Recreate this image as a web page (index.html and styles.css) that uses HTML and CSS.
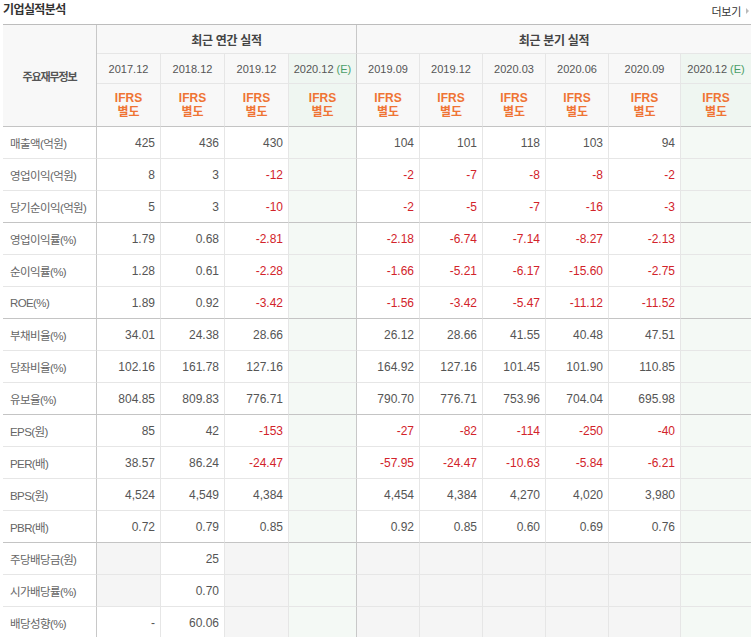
FILE: index.html
```html
<!DOCTYPE html>
<html lang="ko">
<head>
<meta charset="utf-8">
<title>기업실적분석</title>
<link rel="stylesheet" href="styles.css">
</head>
<body>
<div class="wrap">
  <div class="titlebar">
    <h2 class="title">기업실적분석</h2>
    <a class="more" href="#">더보기<span class="arrow"></span></a>
  </div>
  <table class="fin">
    <colgroup>
      <col class="c-label">
      <col class="c-y"><col class="c-y"><col class="c-y"><col class="c-ye">
      <col class="c-q"><col class="c-q"><col class="c-q"><col class="c-q"><col class="c-q2"><col class="c-qe">
    </colgroup>
    <thead>
      <tr class="h1">
        <th rowspan="3" class="hlabel major">주요재무정보</th>
        <th colspan="4" class="grp major">최근 연간 실적</th>
        <th colspan="6" class="grp last">최근 분기 실적</th>
      </tr>
      <tr class="h2">
        <th>2017.12</th><th>2018.12</th><th>2019.12</th><th class="est major">2020.12 <span class="e">(E)</span></th>
        <th>2019.09</th><th>2019.12</th><th>2020.03</th><th>2020.06</th><th>2020.09</th><th class="est last">2020.12 <span class="e">(E)</span></th>
      </tr>
      <tr class="h3">
        <th>IFRS<br>별도</th><th>IFRS<br>별도</th><th>IFRS<br>별도</th><th class="est major">IFRS<br>별도</th>
        <th>IFRS<br>별도</th><th>IFRS<br>별도</th><th>IFRS<br>별도</th><th>IFRS<br>별도</th><th>IFRS<br>별도</th><th class="est last">IFRS<br>별도</th>
      </tr>
    </thead>
    <tbody>
      <tr><th class="major">매출액(억원)</th><td>425</td><td>436</td><td>430</td><td class="est major"></td><td>104</td><td>101</td><td>118</td><td>103</td><td>94</td><td class="est last"></td></tr>
      <tr><th class="major">영업이익(억원)</th><td>8</td><td>3</td><td class="neg">-12</td><td class="est major"></td><td class="neg">-2</td><td class="neg">-7</td><td class="neg">-8</td><td class="neg">-8</td><td class="neg">-2</td><td class="est last"></td></tr>
      <tr class="gend"><th class="major">당기순이익(억원)</th><td>5</td><td>3</td><td class="neg">-10</td><td class="est major"></td><td class="neg">-2</td><td class="neg">-5</td><td class="neg">-7</td><td class="neg">-16</td><td class="neg">-3</td><td class="est last"></td></tr>

      <tr><th class="major">영업이익률(%)</th><td>1.79</td><td>0.68</td><td class="neg">-2.81</td><td class="est major"></td><td class="neg">-2.18</td><td class="neg">-6.74</td><td class="neg">-7.14</td><td class="neg">-8.27</td><td class="neg">-2.13</td><td class="est last"></td></tr>
      <tr><th class="major">순이익률(%)</th><td>1.28</td><td>0.61</td><td class="neg">-2.28</td><td class="est major"></td><td class="neg">-1.66</td><td class="neg">-5.21</td><td class="neg">-6.17</td><td class="neg">-15.60</td><td class="neg">-2.75</td><td class="est last"></td></tr>
      <tr class="gend"><th class="major">ROE(%)</th><td>1.89</td><td>0.92</td><td class="neg">-3.42</td><td class="est major"></td><td class="neg">-1.56</td><td class="neg">-3.42</td><td class="neg">-5.47</td><td class="neg">-11.12</td><td class="neg">-11.52</td><td class="est last"></td></tr>

      <tr><th class="major">부채비율(%)</th><td>34.01</td><td>24.38</td><td>28.66</td><td class="est major"></td><td>26.12</td><td>28.66</td><td>41.55</td><td>40.48</td><td>47.51</td><td class="est last"></td></tr>
      <tr><th class="major">당좌비율(%)</th><td>102.16</td><td>161.78</td><td>127.16</td><td class="est major"></td><td>164.92</td><td>127.16</td><td>101.45</td><td>101.90</td><td>110.85</td><td class="est last"></td></tr>
      <tr class="gend"><th class="major">유보율(%)</th><td>804.85</td><td>809.83</td><td>776.71</td><td class="est major"></td><td>790.70</td><td>776.71</td><td>753.96</td><td>704.04</td><td>695.98</td><td class="est last"></td></tr>

      <tr><th class="major">EPS(원)</th><td>85</td><td>42</td><td class="neg">-153</td><td class="est major"></td><td class="neg">-27</td><td class="neg">-82</td><td class="neg">-114</td><td class="neg">-250</td><td class="neg">-40</td><td class="est last"></td></tr>
      <tr><th class="major">PER(배)</th><td>38.57</td><td>86.24</td><td class="neg">-24.47</td><td class="est major"></td><td class="neg">-57.95</td><td class="neg">-24.47</td><td class="neg">-10.63</td><td class="neg">-5.84</td><td class="neg">-6.21</td><td class="est last"></td></tr>
      <tr><th class="major">BPS(원)</th><td>4,524</td><td>4,549</td><td>4,384</td><td class="est major"></td><td>4,454</td><td>4,384</td><td>4,270</td><td>4,020</td><td>3,980</td><td class="est last"></td></tr>
      <tr class="gend"><th class="major">PBR(배)</th><td>0.72</td><td>0.79</td><td>0.85</td><td class="est major"></td><td>0.92</td><td>0.85</td><td>0.60</td><td>0.69</td><td>0.76</td><td class="est last"></td></tr>

      <tr><th class="major">주당배당금(원)</th><td class="empty"></td><td>25</td><td class="empty"></td><td class="est major"></td><td class="empty"></td><td class="empty"></td><td class="empty"></td><td class="empty"></td><td class="empty"></td><td class="est last"></td></tr>
      <tr><th class="major">시가배당률(%)</th><td class="empty"></td><td>0.70</td><td class="empty"></td><td class="est major"></td><td class="empty"></td><td class="empty"></td><td class="empty"></td><td class="empty"></td><td class="empty"></td><td class="est last"></td></tr>
      <tr><th class="major">배당성향(%)</th><td>-</td><td>60.06</td><td class="empty"></td><td class="est major"></td><td class="empty"></td><td class="empty"></td><td class="empty"></td><td class="empty"></td><td class="empty"></td><td class="est last"></td></tr>
    </tbody>
  </table>
</div>
</body>
</html>
```
FILE: styles.css
```css
html, body {
  margin: 0;
  padding: 0;
  background: #fff;
  overflow: hidden;
}
body {
  font-family: "Liberation Sans", "Noto Sans CJK KR", sans-serif;
  color: #555;
}
.wrap {
  padding-left: 3px;
  width: 748px;
}
.titlebar {
  height: 24px;
  display: flex;
  justify-content: space-between;
  align-items: flex-start;
}
.title {
  margin: 0;
  padding-top: 1px;
  font-family: "Noto Sans CJK KR", sans-serif;
  font-size: 12px;
  font-weight: bold;
  letter-spacing: -0.6px;
  line-height: 16px;
  color: #333;
}
.more {
  margin-top: 4px;
  margin-right: 2px;
  font-family: "Noto Sans CJK KR", sans-serif;
  font-size: 11px;
  line-height: 14px;
  letter-spacing: -0.3px;
  color: #333;
  text-decoration: none;
  display: flex;
  align-items: center;
}
.arrow {
  display: inline-block;
  margin-left: 5px;
  width: 0;
  height: 0;
  border-top: 3px solid transparent;
  border-bottom: 3px solid transparent;
  border-left: 3px solid #bbb;
}
.fin {
  table-layout: fixed;
  width: 748px;
  border-collapse: separate;
  border-spacing: 0;
  border-top: 1px solid #bdbdbd;
}
.c-label { width: 94px; }
.c-y { width: 64px; }
.c-ye { width: 68px; }
.c-q { width: 63px; }
.c-q2 { width: 72px; }
.c-qe { width: 70px; }

.fin th, .fin td {
  box-sizing: border-box;
  padding: 0;
  border-right: 1px solid #e6e6e6;
  border-bottom: 1px solid #e6e6e6;
  white-space: nowrap;
  overflow: hidden;
}
.fin .last { border-right: 0; }
.fin thead th {
  background: #f8f8f8;
  font-weight: normal;
  text-align: center;
}
.fin .h1 th { height: 29px; }
.fin .h2 th { height: 30px; }
.fin .h3 th { height: 43px; border-bottom-color: #c4c4c4; }
.fin .grp {
  font-family: "Noto Sans CJK KR", sans-serif;
  font-weight: bold;
  font-size: 12px;
  letter-spacing: -0.3px;
  color: #444;
}
.fin .hlabel {
  font-family: "Noto Sans CJK KR", sans-serif;
  font-weight: bold;
  font-size: 11px;
  letter-spacing: -1.1px;
  color: #555;
  border-bottom-color: #c4c4c4;
}
.fin .h2 th {
  font-size: 11px;
  color: #555;
}
.fin .h2 .e {
  color: #4a9e68;
}
.fin .h3 th {
  font-weight: bold;
  font-size: 12px;
  line-height: 14px;
  color: #ef7434;
}
.fin thead th.est {
  background: #eff6f1;
}
.fin .major {
  border-right-color: #c8c8c8;
}
.fin tbody th {
  height: 32px;
  text-align: left;
  padding-left: 7px;
  font-weight: normal;
  font-size: 11.5px;
  letter-spacing: -0.6px;
  color: #666;
}
.fin tbody td {
  height: 32px;
  text-align: right;
  padding-right: 5px;
  font-size: 12px;
  color: #555;
  background: #fff;
}
.fin tbody td.neg { color: #d2232a; }
.fin tbody td.est { background: #f4f9f5; }
.fin tbody td.empty { background: #f5f5f5; }
.fin tbody tr.gend th, .fin tbody tr.gend td {
  border-bottom-color: #c4c4c4;
}
```
